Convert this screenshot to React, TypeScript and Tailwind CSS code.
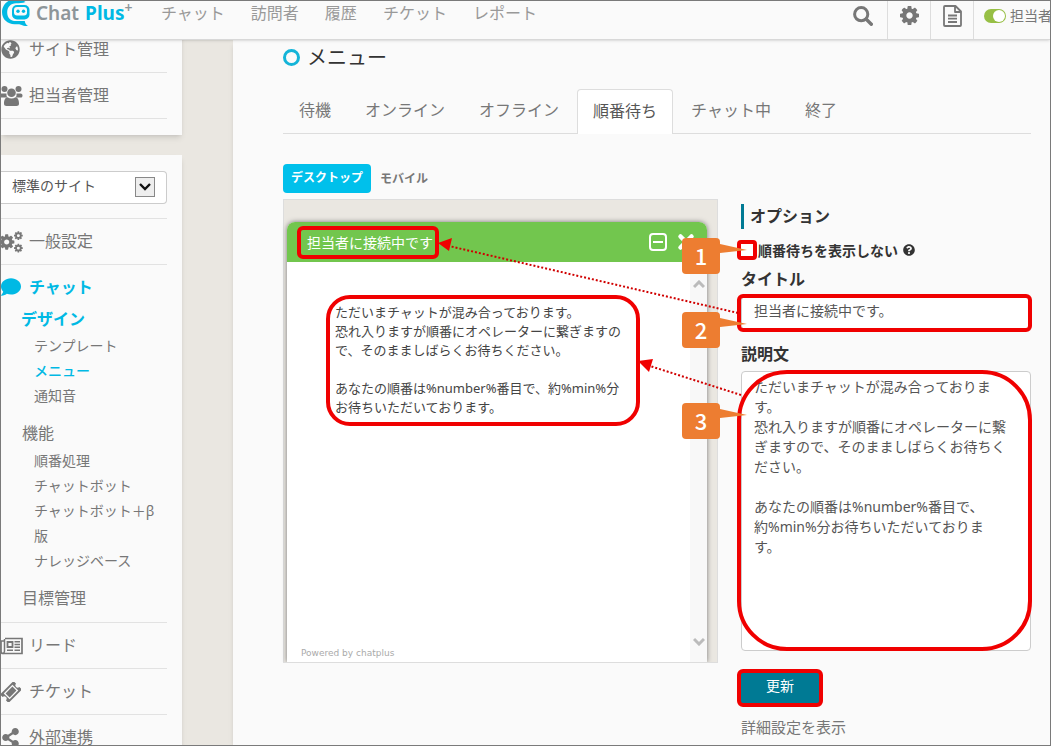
import { useState } from "react";
import type { ReactNode } from "react";
import { FaComment, FaGlobeAmericas, FaQuestionCircle, FaShareAlt } from "react-icons/fa";

const DEFAULT_TITLE = "担当者に接続中です。";
const DEFAULT_MESSAGE =
  "ただいまチャットが混み合っております。\n恐れ入りますが順番にオペレーターに繋ぎますので、そのまましばらくお待ちください。\n\nあなたの順番は%number%番目で、約%min%分お待ちいただいております。";

const tabs = ["待機", "オンライン", "オフライン", "順番待ち", "チャット中", "終了"];

const GEAR =
  "M1024 896q0-106-75-181t-181-75-181 75-75 181 75 181 181 75 181-75 75-181zm512-109v222q0 12-8 23t-20 13l-185 28q-19 54-39 91 35 50 107 138 10 12 10 25t-9 23q-27 37-99 108t-94 71q-12 0-26-9l-138-108q-44 23-91 38-16 136-29 186-7 28-36 28h-222q-14 0-24.5-8.5t-11.5-21.5l-28-184q-49-16-90-37l-141 107q-10 9-25 9-14 0-25-11-126-114-165-168-7-10-7-23 0-12 8-23 15-21 51-66.5t54-70.5q-27-50-41-99l-183-27q-13-2-21-12.5t-8-23.5v-222q0-12 8-23t19-13l186-28q14-46 39-92-40-57-107-138-10-12-10-24 0-10 9-23 26-36 98.5-107.5t94.500-71.5q13 0 26 10l138 107q44-23 91-38 16-136 29-186 7-28 36-28h222q14 0 24.5 8.5t11.5 21.5l28 184q49 16 90 37l142-107q9-9 24-9 13 0 25 10 129 119 165 170 7 8 7 22 0 12-8 23-15 21-51 66.500t-54 70.5q26 50 41 98l183 28q13 2 21 12.5t8 23.5z";

const GearIcon = () => (
  <svg viewBox="0 128 1536 1536" className="size-[19px]" fill="currentColor" aria-hidden="true">
    <path d={GEAR} />
  </svg>
);

const GearsIcon = () => (
  <svg viewBox="0 0 22 22" className="size-[22px]" fill="currentColor" aria-hidden="true">
    <path d={GEAR} transform="translate(-2 2) scale(.01)" />
    <path d={GEAR} transform="translate(13 -.5) scale(.0057)" />
    <path d={GEAR} transform="translate(13 12) scale(.0057)" />
  </svg>
);

const UsersIcon = () => (
  <svg viewBox="0 0 22 22" className="size-[22px]" fill="currentColor" aria-hidden="true">
    <circle cx="3.500" cy="4" r="3" />
    <circle cx="17.500" cy="4" r="3" />
    <path d="M0 8.500h5.500a6 6 0 0 0 .8 4H0zM15.500 8.500h4c1.500 0 2 1 2 2.200 0 1.300-.8 1.800-2 1.800h-4.800a6 6 0 0 0 .8-4z" />
    <circle cx="10.500" cy="7.800" r="4.300" />
    <path d="M6.500 12.200c2.500 1.700 5.500 1.700 8 0 2.500.3 3.500 3 3.500 6.300 0 1.800-1 2.500-2.500 2.500h-10C4 21 3 20.300 3 18.500c0-3.300 1-6 3.500-6.300z" />
  </svg>
);

const SearchIcon = () => (
  <svg viewBox="0 0 20 20" className="size-5" fill="none" stroke="currentColor" aria-hidden="true">
    <circle cx="8.200" cy="8.200" r="6.600" strokeWidth="3" />
    <path d="M13.300 13.300l5 5" strokeWidth="3.400" strokeLinecap="round" />
  </svg>
);

const DocIcon = () => (
  <svg viewBox="0 0 19 22" className="h-[22px] w-[19px]" fill="none" stroke="currentColor" strokeWidth="1.800" aria-hidden="true">
    <path d="M1 2q0-1 1-1h10.500L18 6.500V20q0 1-1 1H2q-1 0-1-1zM12 1v6h6M5 10.500h9M5 13.700h9M5 17h9" strokeLinejoin="round" />
  </svg>
);

const NewsIcon = () => (
  <svg viewBox="0 0 22 18" className="h-[18px] w-[22px]" fill="none" stroke="currentColor" aria-hidden="true">
    <path d="M4 1.500h17v15H2q-2 0-2-2V4h3" strokeWidth="1.700" />
    <path d="M3.500 2v12q0 2-1.500 2.500" strokeWidth="1.500" />
    <path d="M6.500 5h5v5h-5z" strokeWidth="1.800" />
    <path d="M13.500 4.800H19M13.500 7.500H19M13.500 10.300H19M6 13.200h6M13.500 13.200H19" strokeWidth="1.500" />
  </svg>
);

const TicketIcon = () => (
  <svg viewBox="0 0 20 20" className="size-5" aria-hidden="true">
    <g transform="rotate(-45 10 10)">
      <path
        d="M1.500 4h17q1 0 1 1v2.700a2.300 2.300 0 0 0 0 4.600V15q0 1-1 1h-17q-1 0-1-1v-2.700a2.300 2.300 0 0 0 0-4.600V5q0-1 1-1z"
        fill="currentColor"
      />
      <path d="M4.500 6.500h11v7h-11z" fill="none" stroke="#fafafa" strokeWidth="1.300" />
    </g>
  </svg>
);

const CloseIcon = () => (
  <svg viewBox="0 0 18 18" className="size-[18px]" fill="none" stroke="currentColor" strokeWidth="4.500" strokeLinecap="round" aria-hidden="true">
    <path d="M3.500 3.500l11 11M14.500 3.500l-11 11" />
  </svg>
);

const Logo = () => (
  <a href="#" className="flex w-[160px] shrink-0 items-center gap-[6px] pl-px">
    <svg viewBox="0 0 28 28" className="size-7" aria-hidden="true">
      <path
        d="M23.500 3C19.500 0 16 .2 13 .2 5.500.4 0 6 0 13.300 0 20.500 5.500 25 12.500 25.200c3 0 4.500-.2 6.500.5 2 .8 4.300 1.700 7 1.300-2-1.200-3-2.800-3.200-5H14c-5.500 0-8.800-3.500-8.800-8.600C5.200 8 8.500 4.500 14 4.200c3.500-.2 6.500.2 9.500-1.200z"
        fill="#00b9e4"
      />
      <path
        d="M15 6h7.500a5 5 0 0 1 5 5v4.500a5 5 0 0 1-5 5H15a5 5 0 0 1-5-5V11a5 5 0 0 1 5-5z"
        fill="#00b9e4"
      />
      <path d="M15 8h7a3 3 0 0 1 3 3v2.500a3 3 0 0 1-3 3h-7a3 3 0 0 1-3-3V11a3 3 0 0 1 3-3z" fill="#fafafa" />
      <circle cx="16" cy="12.300" r="1.700" fill="#00b9e4" />
      <circle cx="21.500" cy="12.300" r="1.700" fill="#00b9e4" />
    </svg>
    <span className="flex font-['Noto_Sans',sans-serif] text-[19px] leading-[26px] font-semibold text-[#8d9599]">
      Chat<span className="ml-1.5 font-bold text-[#00b9e4]">Plus</span>
      <span className="text-[14px] leading-4">+</span>
    </span>
  </a>
);

const Header = () => (
  <header className="relative z-10 flex h-[39px] shrink-0 border-b border-[#d8d8d8] bg-[#fafafa] shadow-sm">
    <div className="flex h-6 min-w-0 flex-1 items-center">
      <Logo />
      <nav className="flex items-center gap-[26px] text-[16px] whitespace-nowrap text-[#999]">
        <a href="#">チャット</a>
        <a href="#">訪問者</a>
        <a href="#">履歴</a>
        <a href="#">チケット</a>
        <a href="#">レポート</a>
      </nav>
    </div>
    <div className="flex text-[#777]">
      <button aria-label="検索" className="flex w-[46px] pt-[5px]">
        <span className="ml-3">
          <SearchIcon />
        </span>
      </button>
      <button aria-label="設定" className="flex w-[43px] justify-center border-l border-[#ddd] pt-[5px]">
        <GearIcon />
      </button>
      <button aria-label="ドキュメント" className="flex w-[43px] justify-center border-l border-[#ddd] pt-1">
        <DocIcon />
      </button>
      <button className="flex w-[77px] items-start gap-1 overflow-hidden border-l border-[#ddd] pt-[3px] pl-2.5 text-[14px] leading-6 whitespace-nowrap">
        <span className="mt-[5px] flex h-[14px] w-[22px] shrink-0 justify-end rounded-full bg-[#97bf45] p-px">
          <span className="size-3 rounded-full bg-white" />
        </span>
        担当者
      </button>
    </div>
  </header>
);

const MenuRow = ({ icon, children }: { icon: ReactNode; children: ReactNode }) => (
  <a href="#" className="flex h-[46px] items-center gap-2 border-b border-[#e2e2e2] text-[16px]">
    <span className="w-5">{icon}</span>
    <span className="pb-0.5">{children}</span>
  </a>
);

const Sidebar = () => (
  <aside className="w-[181px] shrink-0 text-[#777]">
    <div className="-mt-[13px] bg-[#fafafa] pr-[15px] pb-4 shadow-md">
      <MenuRow icon={<FaGlobeAmericas size={19} />}>サイト管理</MenuRow>
      <MenuRow icon={<UsersIcon />}>担当者管理</MenuRow>
    </div>
    <div className="mt-5 bg-[#fafafa] pt-4 pr-[15px] pb-10 shadow-md">
      <div className="relative mb-[14px]">
        <select
          aria-label="サイト"
          className="h-[33px] w-full appearance-none rounded-r border border-l-0 border-[#ccc] bg-white pb-1 pl-[11px] text-[14px] text-[#555]"
        >
          <option>標準のサイト</option>
        </select>
        <span className="pointer-events-none absolute top-1.5 right-3 flex size-5 items-center justify-center border border-[#888] bg-[#eee]">
          <svg viewBox="0 0 12 8" className="w-3" fill="none" stroke="#111" strokeWidth="2.400">
            <path d="M1 1l5 5 5-5" />
          </svg>
        </span>
      </div>
      <div className="border-t border-[#e2e2e2]">
        <MenuRow icon={<GearsIcon />}>一般設定</MenuRow>
      </div>
      <div className="border-b border-[#e2e2e2] pb-[14px]">
        <a href="#" className="flex h-11 items-center gap-2 text-[16px] font-bold text-[#00b9e4]">
          <span className="w-5">
            <FaComment size={20} />
          </span>
          チャット
        </a>
        <a href="#" className="block h-5 pl-5 text-[16px] leading-5 font-bold text-[#00b9e4]">
          デザイン
        </a>
        <ul className="mt-1 pl-[33px] text-[14px] leading-[25px]">
          <li><a href="#">テンプレート</a></li>
          <li><a href="#" className="font-medium text-[#00b9e4]">メニュー</a></li>
          <li><a href="#">通知音</a></li>
        </ul>
        <a href="#" className="mt-[15px] block h-5 pl-[21px] text-[16px] leading-5">
          機能
        </a>
        <ul className="mt-[5px] pr-2 pl-[33px] text-[14px] leading-[25px]">
          <li><a href="#">順番処理</a></li>
          <li><a href="#">チャットボット</a></li>
          <li><a href="#">チャットボット＋β版</a></li>
          <li><a href="#">ナレッジベース</a></li>
        </ul>
        <a href="#" className="mt-[15px] block h-5 pl-[21px] text-[16px] leading-5">
          目標管理
        </a>
      </div>
      <MenuRow icon={<NewsIcon />}>リード</MenuRow>
      <MenuRow icon={<TicketIcon />}>チケット</MenuRow>
      <MenuRow icon={<FaShareAlt size={19} />}>外部連携</MenuRow>
    </div>
  </aside>
);

// red outline drawn over the element it belongs to
const Mark = ({ className }: { className: string }) => (
  <span className={`pointer-events-none absolute border-4 border-[#f00000] ${className}`} />
);

const Callout = ({ n, className }: { n: number; className: string }) => (
  <span className={`pointer-events-none absolute z-20 flex ${className}`}>
    <span className="flex h-9 w-[38px] items-center justify-center rounded bg-[#ed7d31] pb-0.5 font-['Noto_Sans_CJK_JP',sans-serif] text-[22px] font-medium text-white">
      {n}
    </span>
    <svg width="28" height="20" viewBox="0 0 28 20" aria-hidden="true">
      <path d="M0 6l27 6-27 3z" fill="#ed7d31" />
    </svg>
  </span>
);

const ChatPreview = ({ title, message }: { title: string; message: string }) => (
  <div className="h-[464px] border border-[#ddd] bg-[#eae7e1] pt-[22px] pr-2.5 pl-[3px]">
    <div className="flex h-full flex-col rounded-t-lg bg-white shadow-[0_0_5px_#777] [clip-path:inset(-6px_-6px_0_-6px)]">
      <div className="flex h-10 shrink-0 items-center justify-between rounded-t-lg bg-[#72c64e] pr-3 pl-5 text-white">
        <div className="relative text-[14px]">
          {title.replace("。", "")}
          <Mark className="-top-1.5 -bottom-1.5 -left-2.5 -right-1.5 rounded-md" />
        </div>
        <div className="flex items-center gap-[10px]">
          <button aria-label="最小化" className="flex size-[18px] items-center justify-center rounded-sm border-2 border-white">
            <span className="h-0.5 w-2.5 bg-white" />
          </button>
          <button aria-label="閉じる">
            <CloseIcon />
          </button>
        </div>
      </div>
      <div className="flex min-h-0 flex-1">
        <div className="flex flex-1 flex-col justify-between pt-[41px] pl-12">
          <div className="relative w-[298px] pr-1 text-[13px] leading-[19px] whitespace-pre-wrap text-[#444]">
            {message}
            <Mark className="-top-2 -right-[7px] -bottom-[9px] -left-[9px] rounded-3xl" />
          </div>
          <p className="-ml-[34px] font-['DejaVu_Sans',sans-serif] text-[9px] leading-[18px] text-[#aaa]">
            Powered by chatplus
          </p>
        </div>
        <div className="flex w-[17px] flex-col items-center justify-between bg-[#f8f8f8] pt-[18px] pb-4">
          <svg viewBox="0 0 12 9" className="w-3" fill="none" stroke="#bbb" strokeWidth="3">
            <path d="M1 7l5-5 5 5" />
          </svg>
          <svg viewBox="0 0 12 9" className="w-3" fill="none" stroke="#bbb" strokeWidth="3">
            <path d="M1 2l5 5 5-5" />
          </svg>
        </div>
      </div>
    </div>
  </div>
);

const App = () => {
  const [tab, setTab] = useState("順番待ち");
  const [hidden, setHidden] = useState(false);
  const [title, setTitle] = useState(DEFAULT_TITLE);
  const [message, setMessage] = useState(DEFAULT_MESSAGE);

  return (
    <div className="flex h-screen flex-col overflow-hidden border border-[#7a7a7a] bg-[#eae7e1] font-['Noto_Sans','Noto_Sans_CJK_JP',sans-serif]">
      <Header />
      <div className="flex min-h-0 flex-1 items-start overflow-hidden">
        <Sidebar />
        <main className="ml-[51px] min-h-full min-w-0 flex-1 bg-[#fafafa] pr-[19px] pl-[50px] shadow-md">
          <h1 className="flex h-[35px] items-center gap-[7px] text-[20px] text-[#333]">
            <span className="size-[17px] rounded-full border-3 border-[#14b4d8]" />
            メニュー
          </h1>
          <div className="mt-[14px] flex h-[45px] gap-0.5 border-b border-[#ddd] text-[16px] whitespace-nowrap text-[#777]">
            {tabs.map((t) => (
              <button
                key={t}
                onClick={() => setTab(t)}
                className={
                  t === tab
                    ? "-mb-px rounded-t border border-b-0 border-[#ddd] bg-white px-[15px] pb-[3px] text-[#555]"
                    : "px-4 pb-0.5"
                }
              >
                {t}
              </button>
            ))}
          </div>

          <div className="relative mt-[30px] flex gap-[23px]">
            <section className="min-w-0 flex-1">
              <div className="mb-1.5 flex h-[29px] items-center gap-[9px] text-[12px] font-bold text-[#777]">
                <button className="h-full w-[88px] rounded bg-[#00c0eb] pb-0.5 text-white">デスクトップ</button>
                <button>モバイル</button>
              </div>
              <ChatPreview title={title} message={message} />
            </section>

            <form className="w-[290px] shrink-0 pt-10 text-[#333]" onSubmit={(e) => e.preventDefault()}>
              <h2 className="h-[25px] border-l-3 border-[#007a94] pl-1.5 text-[16px] leading-[25px] font-bold">
                オプション
              </h2>
              <div className="relative mt-[11px] flex h-5 items-center gap-[5px] text-[14px] font-bold">
                <span className="relative size-3 shrink-0">
                  <input
                    id="hide-queue"
                    type="checkbox"
                    checked={hidden}
                    onChange={(e) => setHidden(e.target.checked)}
                    className="block size-3 appearance-none bg-white checked:bg-[#007a94]"
                  />
                  <Mark className="-inset-1 rounded" />
                </span>
                <label htmlFor="hide-queue">順番待ちを表示しない</label>
                <FaQuestionCircle size={12} />
                <Callout n={1} className="-top-0.5 -left-[59px]" />
              </div>

              <label htmlFor="title" className="mt-[7px] block h-6 text-[16px] leading-6 font-bold">
                タイトル
              </label>
              <div className="relative mt-[5px]">
                <input
                  id="title"
                  value={title}
                  onChange={(e) => setTitle(e.target.value)}
                  className="block h-[34px] w-full rounded border border-[#ccc] bg-white pb-1.5 pl-3 text-[14px] text-[#555]"
                />
                <Mark className="-top-0.5 -right-px -bottom-0.5 -left-1 rounded-md" />
                <Callout n={2} className="top-4 -left-[59px]" />
              </div>

              <label htmlFor="message" className="mt-3 block h-6 text-[16px] leading-6 font-bold">
                説明文
              </label>
              <div className="relative mt-[5px]">
                <textarea
                  id="message"
                  value={message}
                  onChange={(e) => setMessage(e.target.value)}
                  className="block h-[280px] w-full resize-none overflow-hidden rounded border border-[#ccc] bg-white pt-[5px] pr-5 pl-3 text-[14px] leading-5 text-[#555]"
                />
                <Mark className="-top-px -right-px bottom-0 -left-1 rounded-[50px]" />
                <Callout n={3} className="top-8 -left-[59px]" />
              </div>

              <div className="relative mt-[22px] w-[78px]">
                <button type="submit" className="block h-[30px] w-full bg-[#007a94] pb-1.5 text-[14px] text-white">
                  更新
                </button>
                <Mark className="-inset-1 rounded-md" />
              </div>
              <a href="#" className="mt-[14px] block text-[15px] leading-5 text-[#777]">
                詳細設定を表示
              </a>
            </form>

            {/* dotted arrows from the fields to the preview */}
            <svg
              className="pointer-events-none absolute top-0 left-0 z-10 h-[300px] w-[470px]"
              viewBox="0 0 470 300"
              fill="none"
              aria-hidden="true"
            >
              <path d="M455 149L166 82" stroke="#d00000" strokeWidth="2" strokeDasharray="2 2" />
              <path d="M155 79l14-5-3 13z" fill="#f00000" />
              <path d="M458 231L367 202" stroke="#d00000" strokeWidth="2" strokeDasharray="2 2" />
              <path d="M355 197l15-2-4 13z" fill="#f00000" />
            </svg>
          </div>
        </main>
      </div>
    </div>
  );
};

export default App;
